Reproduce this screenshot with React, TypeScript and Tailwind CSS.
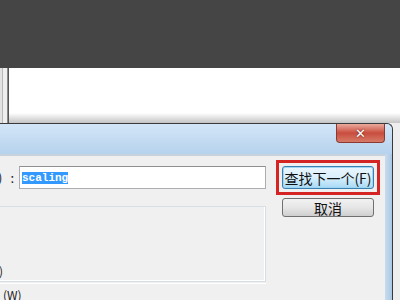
export default function App() {
  const cjk = { fontFamily: '"Noto Sans CJK SC", "Noto Sans", sans-serif' };
  const mono = { fontFamily: '"Liberation Mono", "DejaVu Sans Mono", monospace' };

  return (
    <div className="w-[400px] h-[300px] overflow-hidden bg-[#f2f2f2] flex flex-col" style={cjk}>
      {/* dark top band */}
      <div className="h-[68px] shrink-0 bg-[#454545]" />

      {/* white editor area behind the dialog */}
      <div className="h-[55px] shrink-0 flex bg-white">
        <div className="w-[2px] bg-[#e2e2e2]" />
        <div className="w-[1px] bg-[#b8b8b8]" />
        <div className="w-[4px] bg-[#eeeeee]" />
        <div className="w-[1px] bg-[#8a8a8a]" />
        <div className="w-[1px] bg-[#555555]" />
        <div className="flex-1 flex flex-col">
          <div className="flex-1" />
          <div className="h-[10px] bg-gradient-to-b from-white to-[#c4c4c4]" />
        </div>
      </div>

      {/* dialog */}
      <div className="flex-1 flex">
        <div className="w-[393px] flex flex-col border-t border-r border-[#3a3a3a] rounded-tr-[6px] bg-[#bcd6ee]">
          {/* title bar */}
          <div className="h-[30px] shrink-0 flex bg-gradient-to-b from-[#d3e6f8] to-[#b6d2ed] rounded-tr-[6px]">
            <div className="flex-1" />
            <div className="w-[49px] h-[19px] mr-[7px] flex items-center justify-center rounded-b-[4px] border border-t-0 border-[#8a3a30] bg-gradient-to-b from-[#e9aa9e] via-[#c84c3e] to-[#d77a68]">
              <span className="text-white text-[13px] font-bold leading-none [text-shadow:0_0_2px_#5a1a14]" style={{ fontFamily: '"DejaVu Sans", sans-serif' }}>✕</span>
            </div>
          </div>

          {/* body */}
          <div className="flex-1 flex">
            <div className="w-[385px] flex border-t-2 border-[#c8d2dc] bg-[#f0f0f0]">
              {/* left column */}
              <div className="w-[266px] pt-[10px] flex flex-col">
                <div className="flex items-center h-[23px]">
                  <div className="w-[19px] flex justify-end whitespace-nowrap text-[13px] text-[#1a1a1a] leading-none">
                    查找内容(N)<span className="ml-[8px] mr-[5px]">:</span>
                  </div>
                  <div className="flex-1 h-[23px] bg-white border border-[#abadb3] border-t-[#8e8f8f] flex items-center pl-[2px]">
                    <span className="bg-[#3399ff] text-white text-[11px] leading-[12px] font-bold" style={mono}>
                      scaling
                    </span>
                  </div>
                </div>

                <div className="mt-[17px] h-[76px] border border-[#d5dfe5] border-l-0 flex flex-col">
                  <div className="flex-1 border-r border-b border-white" />
                </div>
                <div className="-mt-[20px] h-[18px] flex items-center">
                  <div className="w-[3px] flex justify-end whitespace-nowrap text-[12px] text-[#1a1a1a] leading-none">
                    区分大小写(C)
                  </div>
                </div>

                <div className="h-[1px] mt-[3px] bg-white" />
                <div className="mt-[5px] flex items-center pl-[3px]">
                  <span className="text-[12px] text-[#1a1a1a] leading-none whitespace-nowrap">(W)</span>
                </div>
              </div>

              {/* buttons column */}
              <div className="ml-[10px] pt-[4px] flex flex-col">
                <div className="border-[3px] border-[#d42424] p-[3px]">
                  <div className="w-[92px] h-[23px] rounded-[3px] border border-[#3c7fb1] bg-gradient-to-b from-[#eaf6fd] via-[#d9f0fc] to-[#a7d9f5] flex items-center justify-center shadow-[inset_0_0_0_1px_#9fd6f3]">
                    <span className="text-[14px] text-[#111] leading-none whitespace-nowrap">查找下一个(F)</span>
                  </div>
                </div>
                <div className="ml-[6px] mt-[3px] w-[92px] h-[19px] rounded-[3px] border border-[#707070] bg-gradient-to-b from-[#f2f2f2] via-[#e6e6e6] to-[#cfcfcf] flex items-center justify-center">
                  <span className="text-[14px] text-[#111] leading-none">取消</span>
                </div>
              </div>
            </div>
            {/* right window frame */}
            <div className="flex-1 bg-gradient-to-r from-[#c9dcee] to-[#a9c8e6]" />
          </div>
        </div>
        <div className="flex-1 bg-[#eeeeee]" />
      </div>
    </div>
  );
}
